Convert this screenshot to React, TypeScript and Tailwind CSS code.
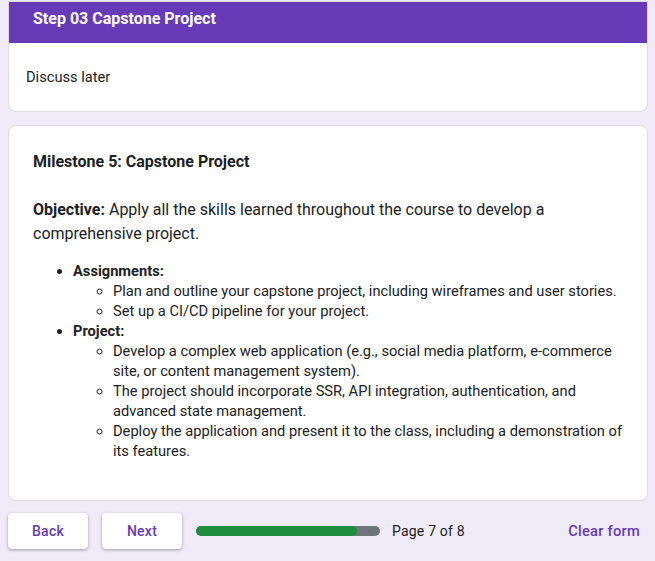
export default function App() {
  return (
    <div
      className="min-h-[561px] bg-[#f0ebf8] text-[#202124]"
      style={{ fontFamily: 'Roboto, "Liberation Sans", Arial, sans-serif' }}
    >
      <div className="ml-2 w-[640px] pt-px">
        {/* section header card */}
        <div className="overflow-hidden rounded-b-lg border border-[#dadce0] bg-white">
          <div className="h-[41px] bg-[#673ab7] px-6 pt-[5px]">
            <h2 className="text-base leading-6 font-bold text-white">Step 03 Capstone Project</h2>
          </div>
          <div className="px-[17px] pt-6 pb-6">
            <p className="text-[14.67px] leading-5">Discuss later</p>
          </div>
        </div>

        {/* milestone card */}
        <div className="mt-[13px] rounded-lg border border-[#dadce0] bg-white px-6 pt-6 pb-[39px]">
          <h3 className="text-base leading-6 font-bold">Milestone 5: Capstone Project</h3>
          <p className="mt-6 text-base leading-6">
            <strong className="font-bold">Objective:</strong> Apply all the skills learned throughout the course to
            develop a comprehensive project.
          </p>
          <ul className="mt-[15px] list-disc pl-10 text-[14.67px] leading-5">
            <li>
              <strong className="font-bold">Assignments:</strong>
              <ul className="list-[circle] pl-10">
                <li>Plan and outline your capstone project, including wireframes and user stories.</li>
                <li>Set up a CI/CD pipeline for your project.</li>
              </ul>
            </li>
            <li>
              <strong className="font-bold">Project:</strong>
              <ul className="list-[circle] pl-10">
                <li>
                  Develop a complex web application (e.g., social media platform, e-commerce site, or content
                  management system).
                </li>
                <li>
                  The project should incorporate SSR, API integration, authentication, and advanced state
                  management.
                </li>
                <li>
                  Deploy the application and present it to the class, including a demonstration of its features.
                </li>
              </ul>
            </li>
          </ul>
        </div>

        {/* navigation */}
        <div className="mt-3 flex items-center">
          <button className="h-9 w-20 rounded bg-white text-sm font-medium tracking-[0.25px] text-[#673ab7] shadow-[0_1px_2px_rgba(60,64,67,0.3),0_1px_3px_1px_rgba(60,64,67,0.15)]">
            Back
          </button>
          <button className="ml-[14px] h-9 w-20 rounded bg-white text-sm font-medium tracking-[0.25px] text-[#673ab7] shadow-[0_1px_2px_rgba(60,64,67,0.3),0_1px_3px_1px_rgba(60,64,67,0.15)]">
            Next
          </button>
          <div className="ml-[14px] h-2.5 w-[184px] overflow-hidden rounded-full bg-[#70757a]">
            <div className="h-full rounded-full bg-[#1e8e3e]" style={{ width: '161px' }} />
          </div>
          <span className="ml-3 text-sm tracking-[0.2px]">Page 7 of 8</span>
          <button className="ml-auto mr-2 text-[14.67px] font-medium tracking-[0.25px] text-[#673ab7]">
            Clear form
          </button>
        </div>
      </div>
    </div>
  )
}
